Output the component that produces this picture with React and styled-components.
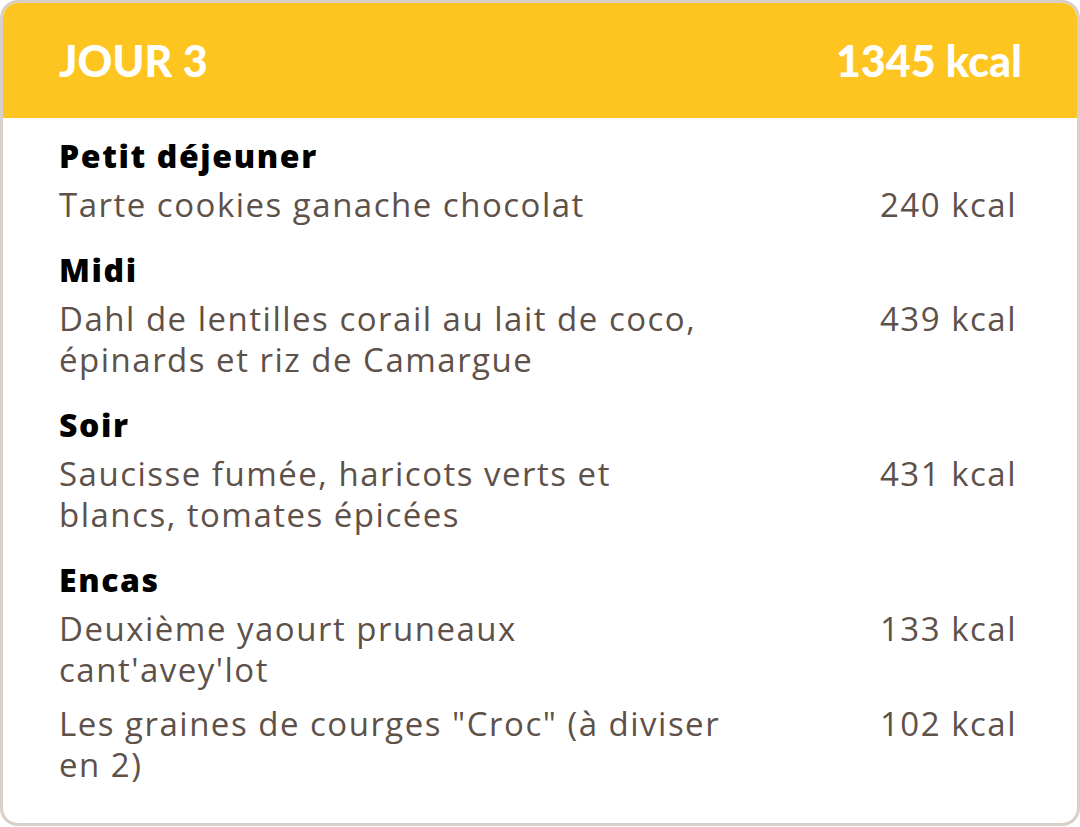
import React from "react";
import styled, {createGlobalStyle} from "styled-components";

const GlobalStyle = createGlobalStyle`
  html, body {
    margin: 0;
    padding: 0;
    background: #ffffff;
  }
  body {
    font-family: "Open Sans", Lato, sans-serif;
  }
`;

// Style
const Card = styled.div`
  box-sizing: border-box;
  width: 1080px;
  height: 826px;
  border: 3px solid #d9cfc9;
  border-radius: 18px;
  overflow: hidden;
  background: #ffffff;
`;

const Header = styled.div`
  display: flex;
  align-items: center;
  justify-content: space-between;
  height: 115px;
  padding: 0 55px 0 56px;
  background-color: #fec41f;
  color: #ffffff;
  font-family: Lato, sans-serif;
  font-weight: 900;
  font-size: 43px;
  line-height: 1;
`;

const Body = styled.div`
  display: flex;
  flex-direction: column;
  gap: 23px;
  padding: 16px 40px 0 56px;
`;

const Section = styled.section`
  display: flex;
  flex-direction: column;
`;

const Title = styled.h3`
  margin: 0 0 6px;
  font-family: "Open Sans", sans-serif;
  font-weight: 800;
  font-size: 32px;
  letter-spacing: 1.6px;
  line-height: 44px;
  color: #000000;
`;

const Items = styled.div`
  display: flex;
  flex-direction: column;
  gap: 13px;
`;

const Row = styled.div`
  display: grid;
  grid-template-columns: 1fr 157px;
  font-family: "Open Sans", sans-serif;
  font-size: 33px;
  letter-spacing: 1.5px;
  line-height: 41px;
  color: #5e514a;
`;

const Desc = styled.div`
  display: flex;
  flex-direction: column;
`;

const Kcal = styled.div`
  white-space: nowrap;
`;

const meals = [
  {
    title: "Petit déjeuner",
    items: [{lines: ["Tarte cookies ganache chocolat"], kcal: 240}]
  },
  {
    title: "Midi",
    items: [
      {
        lines: [
          "Dahl de lentilles corail au lait de coco,",
          "épinards et riz de Camargue"
        ],
        kcal: 439
      }
    ]
  },
  {
    title: "Soir",
    items: [
      {
        lines: ["Saucisse fumée, haricots verts et", "blancs, tomates épicées"],
        kcal: 431
      }
    ]
  },
  {
    title: "Encas",
    items: [
      {lines: ["Deuxième yaourt pruneaux", "cant'avey'lot"], kcal: 133},
      {
        lines: ['Les graines de courges "Croc" (à diviser', "en 2)"],
        kcal: 102
      }
    ]
  }
];

export default function App() {
  return (
    <>
      <GlobalStyle />
      <Card>
        <Header>
          <span>JOUR 3</span>
          <span>1345 kcal</span>
        </Header>
        <Body>
          {meals.map(meal => (
            <Section key={meal.title}>
              <Title>{meal.title}</Title>
              <Items>
                {meal.items.map(item => (
                  <Row key={item.kcal}>
                    <Desc>
                      {item.lines.map(line => (
                        <span key={line}>{line}</span>
                      ))}
                    </Desc>
                    <Kcal>{item.kcal} kcal</Kcal>
                  </Row>
                ))}
              </Items>
            </Section>
          ))}
        </Body>
      </Card>
    </>
  );
}
